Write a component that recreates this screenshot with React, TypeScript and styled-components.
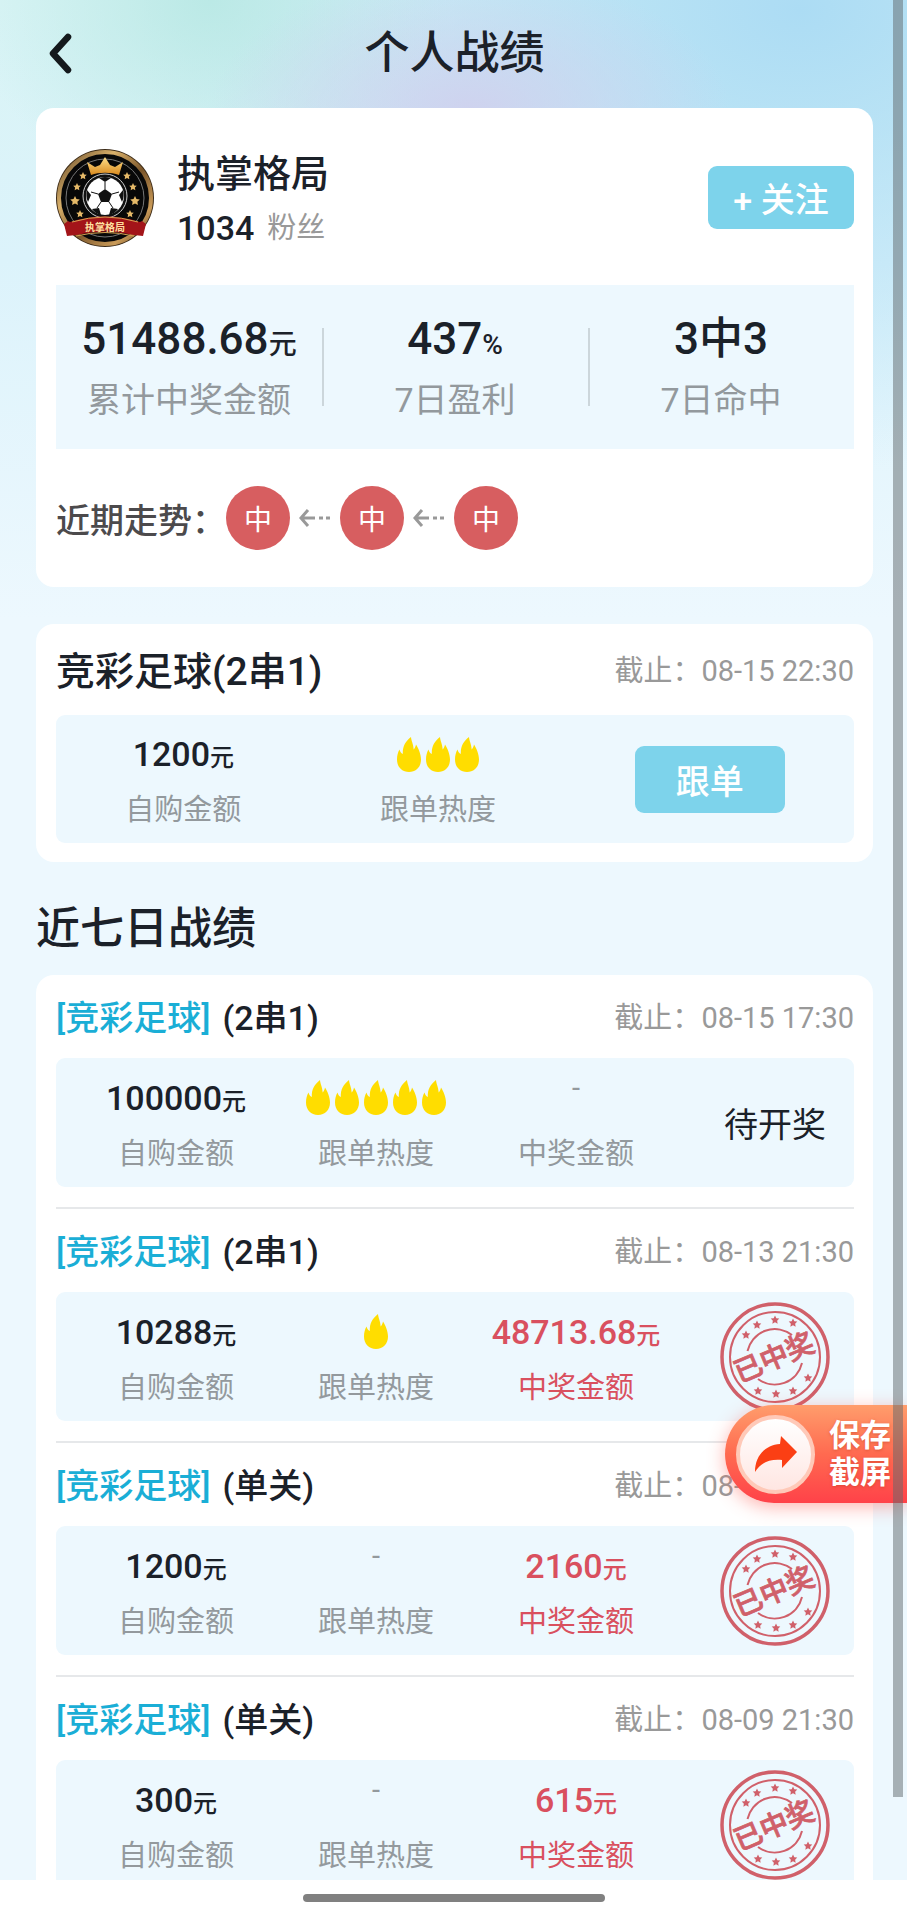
import React from 'react';
import styled, { createGlobalStyle } from 'styled-components';

const GlobalStyle = createGlobalStyle`
  * {
    box-sizing: border-box;
  }

  body {
    margin: 0;
    background: #fff;
    color: #1b2129;
    font-family: Roboto, 'Noto Sans CJK SC', sans-serif;
  }

  h1, h2, h3, p {
    margin: 0;
  }

  button {
    border: 0;
    padding: 0;
    font-family: inherit;
    cursor: pointer;
  }
`;

const Shell = styled.div`
  position: relative;
  display: flex;
  flex-direction: column;
  height: 100vh;
  overflow: hidden;
`;

const Page = styled.main`
  flex: 1;
  min-height: 0;
  overflow: hidden;
  padding: 0 34px 0 36px;
  background:
    radial-gradient(ellipse 260px 140px at 470px 110px, rgba(207, 209, 238, 0.95), rgba(207, 209, 238, 0) 100%),
    radial-gradient(ellipse 240px 200px at 210px 0, rgba(184, 232, 228, 0.9), rgba(184, 232, 228, 0) 100%),
    radial-gradient(ellipse 660px 460px at 800px 10px, rgba(172, 220, 244, 1), rgba(172, 220, 244, 0) 100%),
    linear-gradient(#d9f4f5 0, #dcf3fb 260px, #edf8fe 620px);
`;

const Header = styled.header`
  display: grid;
  grid-template-columns: 48px 1fr 48px;
  align-items: center;
  height: 108px;
`;

const BackButton = styled.button`
  display: flex;
  padding-left: 10px;
  background: none;
`;

const PageTitle = styled.h1`
  font-size: 45px;
  font-weight: 500;
  line-height: 60px;
  text-align: center;
`;

const Card = styled.section`
  display: flow-root;
  margin-bottom: 37px;
  padding: 0 19px 0 20px;
  border-radius: 18px;
  background: #fff;
`;

const Profile = styled.div`
  display: flex;
  align-items: center;
  gap: 23px;
  height: 177px;
  padding-top: 2px;
`;

const ProfileText = styled.div`
  flex: 1;
  padding-top: 7px;
`;

const Name = styled.h2`
  font-size: 38px;
  font-weight: 500;
  line-height: 54px;
`;

const Fans = styled.p`
  display: flex;
  align-items: center;
  gap: 13px;
  font-size: 34px;
  font-weight: 500;
  line-height: 54px;
`;

const FansLabel = styled.span`
  color: #999;
  font-size: 29px;
  font-weight: 400;
`;

const ActionButton = styled.button<{ $width: number; $height: number }>`
  width: ${props => props.$width}px;
  height: ${props => props.$height}px;
  border-radius: 9px;
  background: #7dd3eb;
  color: #fff;
  font-size: 34px;
  font-weight: 500;
`;

const Stats = styled.div`
  display: grid;
  grid-template-columns: repeat(3, 1fr);
  align-items: center;
  height: 164px;
  background: #edf8fe;
`;

const Stat = styled.div`
  display: flex;
  flex-direction: column;
  align-items: center;
  padding-top: 6px;

  & + & {
    background: linear-gradient(#ccd6db, #ccd6db) no-repeat left center / 2px 78px;
  }
`;

const StatValue = styled.p`
  font-size: 44px;
  font-weight: 500;
  line-height: 54px;
`;

const StatUnit = styled.span`
  font-size: 28px;
`;

const StatLabel = styled.p`
  color: #93999d;
  font-size: 34px;
  line-height: 56px;
`;

const Trend = styled.div`
  display: flex;
  align-items: center;
  height: 138px;
`;

const TrendLabel = styled.span`
  width: 170px;
  color: #4c4a4c;
  font-size: 34px;
  font-weight: 500;
`;

const TrendList = styled.div`
  display: flex;
  align-items: center;
  gap: 8px;
`;

const TrendDot = styled.span`
  display: flex;
  align-items: center;
  justify-content: center;
  width: 64px;
  height: 64px;
  border-radius: 50%;
  background: #d75e60;
  color: #fff;
  font-size: 28px;
`;

const CardHead = styled.div<{ $height: number }>`
  display: flex;
  align-items: center;
  justify-content: space-between;
  height: ${props => props.$height}px;
  padding-bottom: 3px;
`;

const OrderTitle = styled.h2`
  font-size: 39px;
  font-weight: 500;
`;

const Deadline = styled.span`
  color: #999;
  font-size: 29px;
`;

const OrderPanel = styled.div`
  display: flex;
  align-items: center;
  justify-content: space-around;
  height: 128px;
  margin-bottom: 19px;
  border-radius: 9px;
  background: #edf8fe;
`;

const Metric = styled.div<{ $win?: boolean }>`
  display: flex;
  flex-direction: column;
  align-items: center;
  padding-top: 6px;
  color: ${props => (props.$win ? '#d9505f' : '#1b2129')};
`;

const MetricValue = styled.div`
  display: flex;
  align-items: baseline;
  height: 56px;
  font-size: 34px;
  font-weight: 500;
  line-height: 56px;
`;

const MetricUnit = styled.span`
  font-size: 24px;
`;

const MetricLabel = styled.p<{ $win?: boolean }>`
  color: ${props => (props.$win ? '#d9505f' : '#93999d')};
  font-size: 29px;
  line-height: 56px;
`;

const Dash = styled.span`
  color: #93999d;
  font-size: 29px;
  font-weight: 400;
  line-height: 36px;
`;

const Flames = styled.span`
  display: flex;
  align-items: center;
  align-self: center;
  gap: 5px;
`;

const SectionTitle = styled.h2`
  margin: 0 0 16px;
  font-size: 44px;
  font-weight: 500;
  line-height: 60px;
`;

const Row = styled.article`
  padding-bottom: 20px;

  & + & {
    border-top: 2px solid #e6e8ea;
  }
`;

const RowTitle = styled.h3`
  display: flex;
  gap: 12px;
  font-size: 34px;
  font-weight: 500;
`;

const League = styled.span`
  color: #1aaed6;
`;

const RowPanel = styled.div`
  display: grid;
  grid-template-columns: repeat(3, 1fr) 178px;
  align-items: center;
  height: 129px;
  padding-left: 20px;
  border-radius: 9px;
  background: #edf8fe;
`;

const Result = styled.div`
  display: flex;
  justify-content: center;
  padding-left: 20px;
  font-size: 34px;
`;

const SaveButton = styled.button`
  position: absolute;
  top: 1405px;
  right: 0;
  display: flex;
  align-items: center;
  gap: 13px;
  width: 182px;
  height: 98px;
  padding-left: 11px;
  border-radius: 49px 0 0 49px;
  background: linear-gradient(#ff9d6c, #ff6a50 50%, #ff4249);
  box-shadow: 0 4px 18px rgba(255, 90, 80, 0.45);
  color: #fff;
`;

const SaveIcon = styled.span`
  display: flex;
  align-items: center;
  justify-content: center;
  width: 79px;
  height: 79px;
  border: 4px solid #ffc9b8;
  border-radius: 50%;
  background: linear-gradient(#fff, #ffe6e2);
`;

const SaveText = styled.span`
  width: 64px;
  font-size: 31px;
  font-weight: 700;
  line-height: 37px;
  text-shadow: 0 1px 3px rgba(190, 60, 30, 0.5);
`;

const ScrollThumb = styled.div`
  position: absolute;
  top: 0;
  right: 4px;
  bottom: 123px;
  width: 10px;
  background: rgba(96, 104, 108, 0.5);
`;

const HomeBar = styled.footer`
  display: flex;
  justify-content: center;
  height: 40px;
  padding-top: 14px;
  background: #fff;
`;

const HomeIndicator = styled.div`
  width: 302px;
  height: 8px;
  border-radius: 4px;
  background: #808080;
`;

function BackIcon() {
  return (
    <svg width="28" height="44" viewBox="0 0 28 44" fill="none">
      <path d="M22 5L7 21.500 22 38" stroke="#14191c" strokeWidth="6.500" strokeLinecap="round" strokeLinejoin="round" />
    </svg>
  );
}

function Flame() {
  return (
    <svg width="24" height="35" viewBox="0 0 24 35">
      <path
        d="M14 0c.3 4 2.300 6.500 2.700 12.500 1.100-1.200 1.900-2.800 2.300-5C21.500 11.500 24 17 24 22.500 24 30 19 35 12 35S0 30 0 22.500C0 18.500 1 15 2.500 12.500c.6 2 1.500 3.500 3.300 4.500C5.500 9 8.500 4.500 14 0z"
        fill="#ffdd00"
      />
    </svg>
  );
}

function TrendArrow() {
  return (
    <svg width="34" height="20" viewBox="0 0 34 20" fill="none" stroke="#999" strokeWidth="3">
      <path d="M10 2L3 10l7 8M3 10h14M21 10h4M28 10h4" />
    </svg>
  );
}

const starPoints = (cx: number, cy: number, r: number) =>
  Array.from({ length: 10 }, (_, i) => {
    const radius = i % 2 ? r * 0.5 : r;
    const angle = (Math.PI * i) / 5 - Math.PI / 2;
    return `${(cx + radius * Math.cos(angle)).toFixed(2)},${(cy + radius * Math.sin(angle)).toFixed(2)}`;
  }).join(' ');

const STAMP_STARS = [
  [26, 33], [37, 23], [55, 18], [73, 21], [88, 76], [73, 89], [56, 92], [38, 89],
];

function WinStamp() {
  return (
    <svg width="110" height="110" viewBox="0 0 110 110" fill="none" stroke="#d0606a" role="img" aria-label="已中奖">
      <circle cx="55" cy="55" r="53" strokeWidth="3.500" />
      <circle cx="55" cy="55" r="45" strokeWidth="2" />
      <path d="M27.500 49A28 28 0 0 1 72 33M82 61A28 28 0 0 1 38 77" strokeWidth="2" />
      {STAMP_STARS.map(([x, y]) => (
        <polygon key={`${x}-${y}`} points={starPoints(x, y, 4.5)} fill="#d0606a" stroke="none" />
      ))}
      <text
        x="54"
        y="65"
        textAnchor="middle"
        transform="rotate(-23 55 55)"
        fontSize="28"
        fontWeight="500"
        fill="#d0606a"
        strokeWidth="0.800"
      >
        已中奖
      </text>
    </svg>
  );
}

const BADGE_STARS = [
  [27, 27, 4], [21, 38, 4], [19, 52, 5], [24, 65, 4],
  [71, 27, 4], [77, 38, 4], [79, 52, 5], [74, 65, 4],
];

function Avatar() {
  return (
    <svg width="98" height="98" viewBox="0 0 98 98" role="img" aria-label="执掌格局">
      <defs>
        <linearGradient id="gold" x1="0" y1="0" x2="1" y2="1">
          <stop offset="0" stopColor="#5f4526" />
          <stop offset="0.300" stopColor="#d9b06a" />
          <stop offset="0.550" stopColor="#7a552a" />
          <stop offset="0.800" stopColor="#c99a58" />
          <stop offset="1" stopColor="#5a3c1c" />
        </linearGradient>
        <linearGradient id="crown" x1="0" y1="0" x2="0" y2="1">
          <stop offset="0" stopColor="#ffe08a" />
          <stop offset="1" stopColor="#d98a1e" />
        </linearGradient>
      </defs>
      <circle cx="49" cy="49" r="49" fill="#3b2a17" />
      <circle cx="49" cy="49" r="46" fill="#080808" stroke="url(#gold)" strokeWidth="4" />
      <circle cx="49" cy="49" r="39" fill="none" stroke="#777" strokeWidth="1" />
      {BADGE_STARS.map(([x, y, r]) => (
        <polygon key={`${x}-${y}`} points={starPoints(x, y, r)} fill="#e5b968" />
      ))}
      <path d="M35 26l-4-13 8 5 5-2 5-8 5 8 5 2 8-5-4 13c-8-3-20-3-28 0z" fill="url(#crown)" />
      <circle cx="49" cy="47" r="22" fill="#111" stroke="#cfcfcf" strokeWidth="1" />
      <circle cx="49" cy="47" r="19" fill="#fff" />
      <g fill="#111">
        <path d="M49 40l7 5-3 8h-8l-3-8z" />
        <path d="M43 29l6 4 6-4c-4-1.500-8-1.500-12 0zM31 41l4 5-3 7c-2-4-2-8-1-12zM67 41l-4 5 3 7c2-4 2-8 1-12zM36 60l7-1 2 7c-4-1-7-3-9-6zM62 60l-7-1-2 7c4-1 7-3 9-6z" />
      </g>
      <path d="M49 40v-7M56 45l7-2M53 53l4 6M45 53l-4 6M42 45l-7-2" stroke="#111" strokeWidth="1" />
      <path d="M14 73q35-11 70 0l2-1 4 3-3 12-9-1q-29-7-58 0l-9 1-3-12 4-3z" fill="#a31419" />
      <path d="M16 73q33-10 66 0M20 87q29-7 58 0" fill="none" stroke="#d8a050" strokeWidth="1" />
      <text x="49" y="82" textAnchor="middle" fontSize="10" fontWeight="700" fill="#ffe0a0">
        执掌格局
      </text>
    </svg>
  );
}

function ShareIcon() {
  return (
    <svg width="44" height="38" viewBox="0 0 44 38">
      <path d="M27 1l16 16-15 16v-8C16 24 7 27 1 37 1 21 11 10 26 9z" fill="#fb3f14" />
    </svg>
  );
}

type Record = {
  play: string;
  deadline: string;
  amount: string;
  heat: number;
  prize?: string;
};

const records: Record[] = [
  { play: '(2串1)', deadline: '08-15 17:30', amount: '100000', heat: 5 },
  { play: '(2串1)', deadline: '08-13 21:30', amount: '10288', heat: 1, prize: '48713.68' },
  { play: '(单关)', deadline: '08-12 21:30', amount: '1200', heat: 0, prize: '2160' },
  { play: '(单关)', deadline: '08-09 21:30', amount: '300', heat: 0, prize: '615' },
];

const stats = [
  { value: '51488.68', unit: '元', label: '累计中奖金额' },
  { value: '437', unit: '%', label: '7日盈利' },
  { value: '3中3', unit: '', label: '7日命中' },
];

function Amount({ value, label, win = false }: { value?: string; label: string; win?: boolean }) {
  return (
    <Metric $win={win}>
      <MetricValue>
        {value ? <>{value}<MetricUnit>元</MetricUnit></> : <Dash>-</Dash>}
      </MetricValue>
      <MetricLabel $win={win}>{label}</MetricLabel>
    </Metric>
  );
}

function Heat({ level }: { level: number }) {
  return (
    <Metric>
      <MetricValue>
        {level > 0 ? (
          <Flames>
            {Array(level).fill(null).map((_, index) => <Flame key={index} />)}
          </Flames>
        ) : (
          <Dash>-</Dash>
        )}
      </MetricValue>
      <MetricLabel>跟单热度</MetricLabel>
    </Metric>
  );
}

function RecordRow({ play, deadline, amount, heat, prize }: Record) {
  return (
    <Row>
      <CardHead $height={83}>
        <RowTitle>
          <League>[竞彩足球]</League>
          <span>{play}</span>
        </RowTitle>
        <Deadline>截止：{deadline}</Deadline>
      </CardHead>
      <RowPanel>
        <Amount value={amount} label="自购金额" />
        <Heat level={heat} />
        <Amount value={prize} label="中奖金额" win={Boolean(prize)} />
        <Result>{prize ? <WinStamp /> : '待开奖'}</Result>
      </RowPanel>
    </Row>
  );
}

export default function App() {
  return (
    <Shell>
      <GlobalStyle />
      <Page>
        <Header>
          <BackButton type="button" aria-label="返回">
            <BackIcon />
          </BackButton>
          <PageTitle>个人战绩</PageTitle>
        </Header>

        <Card>
          <Profile>
            <Avatar />
            <ProfileText>
              <Name>执掌格局</Name>
              <Fans>1034 <FansLabel>粉丝</FansLabel></Fans>
            </ProfileText>
            <ActionButton type="button" $width={146} $height={63}>+ 关注</ActionButton>
          </Profile>
          <Stats>
            {stats.map(stat => (
              <Stat key={stat.label}>
                <StatValue>{stat.value}<StatUnit>{stat.unit}</StatUnit></StatValue>
                <StatLabel>{stat.label}</StatLabel>
              </Stat>
            ))}
          </Stats>
          <Trend>
            <TrendLabel>近期走势：</TrendLabel>
            <TrendList>
              <TrendDot>中</TrendDot>
              <TrendArrow />
              <TrendDot>中</TrendDot>
              <TrendArrow />
              <TrendDot>中</TrendDot>
            </TrendList>
          </Trend>
        </Card>

        <Card>
          <CardHead $height={91}>
            <OrderTitle>竞彩足球(2串1)</OrderTitle>
            <Deadline>截止：08-15 22:30</Deadline>
          </CardHead>
          <OrderPanel>
            <Amount value="1200" label="自购金额" />
            <Heat level={3} />
            <ActionButton type="button" $width={150} $height={67}>跟单</ActionButton>
          </OrderPanel>
        </Card>

        <SectionTitle>近七日战绩</SectionTitle>
        <Card>
          {records.map(record => (
            <RecordRow key={record.deadline} {...record} />
          ))}
        </Card>
      </Page>

      <HomeBar>
        <HomeIndicator />
      </HomeBar>

      <SaveButton type="button">
        <SaveIcon>
          <ShareIcon />
        </SaveIcon>
        <SaveText>保存截屏</SaveText>
      </SaveButton>
      <ScrollThumb />
    </Shell>
  );
}
